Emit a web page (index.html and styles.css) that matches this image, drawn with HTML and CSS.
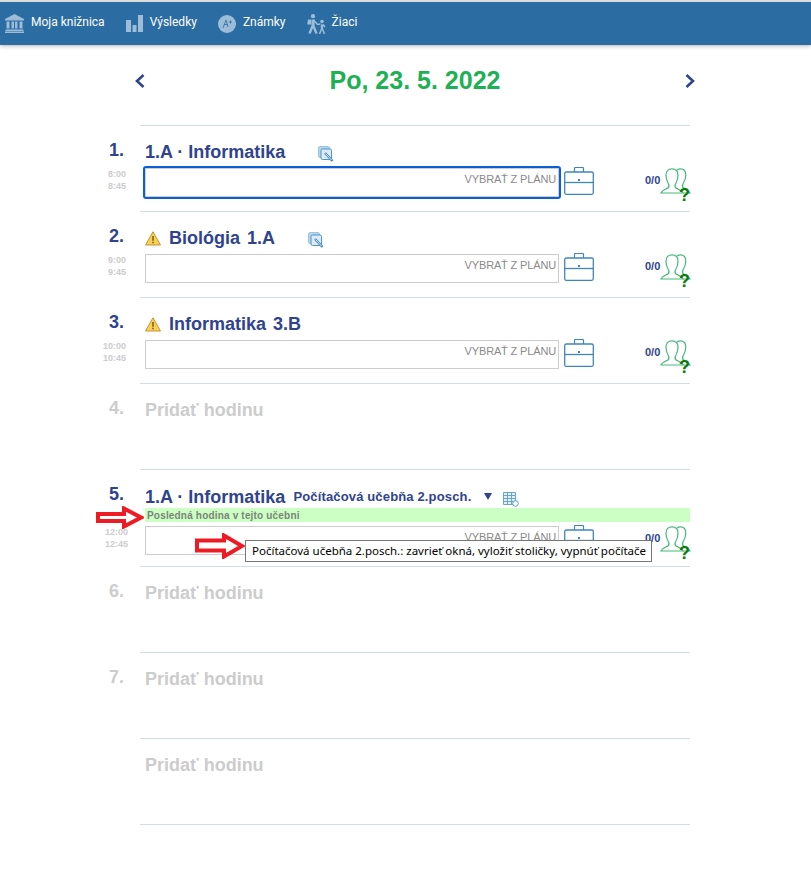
FILE: index.html
```html
<!DOCTYPE html>
<html lang="sk">
<head>
<meta charset="utf-8">
<title>Po, 23. 5. 2022</title>
<link rel="stylesheet" href="styles.css">
</head>
<body>
<svg class="defs" width="0" height="0" aria-hidden="true">
  <symbol id="i-case" viewBox="0 0 30 28">
    <path d="M10.5 5V1.5a1 1 0 0 1 1-1h7a1 1 0 0 1 1 1V5" fill="none" stroke="currentColor" stroke-width="1.2"/>
    <rect x=".7" y="5" width="28.6" height="22.3" rx="1.5" fill="none" stroke="currentColor" stroke-width="1.3"/>
    <path d="M.7 15.5h28.6" stroke="currentColor" stroke-width="1.3"/>
    <rect x="14" y="12" width="2" height="2" fill="currentColor"/>
  </symbol>
  <symbol id="i-people" viewBox="0 0 32 26">
    <path d="M17 2C18.500 1 19.500 .8 20.500 .8C23.500 .8 25.800 3 25.800 7C25.800 10 25 12.500 23.500 15C22.500 16.500 22 18 23 19.500C24.500 21 28 22 30 25L23 25" fill="none" stroke="currentColor" stroke-width="1.200"/>
    <path d="M1 25C2 22 7 21 8.500 19.500C9.500 18 9 16.500 8 15C6.500 12.500 6 10 6 7C6 3 8.500 .8 12 .8C15.500 .8 18 3 18 7C18 10 17.500 12.500 16 15C15 16.500 14.500 18 15.500 19.500C17 21 21.500 22 23 25Z" fill="#fff" stroke="currentColor" stroke-width="1.200"/>
  </symbol>
  <symbol id="i-copy" viewBox="0 0 16 16">
    <rect x=".5" y=".5" width="11" height="11" rx="1.500" fill="#b5d5ea" stroke="#9cc5e0"/>
    <rect x="3" y="3" width="10.500" height="10.500" rx="1.500" fill="#dcebf6" stroke="#4f95c8"/>
    <path d="M7 7l7.500 8" stroke="#3f86bf" stroke-width="2.400"/>
    <path d="M7.500 7.500l6 6.500" stroke="#fff" stroke-width=".8"/>
  </symbol>
  <symbol id="i-warn" viewBox="0 0 16 15">
    <path d="M8 .8L15.500 14H.5z" fill="#f7d154" stroke="#c9923a" stroke-linejoin="round"/>
    <path d="M8 5v4.800" stroke="#7a5a10" stroke-width="1.500"/>
    <path d="M8 10.800v1.500" stroke="#7a5a10" stroke-width="1.500"/>
  </symbol>
</svg>

<header class="topbar">
  <nav class="nav">
    <a class="nav__item">
      <svg class="nav__icon" width="19" height="19" viewBox="0 0 19 19"><path d="M9.500 0L19 5v1.500H0V5z M1.500 7.500h3v7h-3z M6.500 7.500h2.500v7H6.500z M10 7.500h2.500v7H10z M14.500 7.500h3v7h-3z M.5 15.500h18V17H.5z M0 17.500h19V19H0z"/></svg>
      <span>Moja knižnica</span>
    </a>
    <a class="nav__item">
      <svg class="nav__icon" width="17" height="17" viewBox="0 0 17 17"><path d="M0 5h5v12H0z M6.500 10h4v7h-4z M12 0h5v17h-5z"/></svg>
      <span>Výsledky</span>
    </a>
    <a class="nav__item">
      <svg class="nav__icon" width="18" height="18" viewBox="0 0 18 18"><circle cx="9" cy="9" r="9"/><path d="M5 13L8 5l2 7M6.200 9.500h3.300M11 7h3M12.500 5.500v3" fill="none" stroke="#2b6da3" stroke-width=".8"/></svg>
      <span>Známky</span>
    </a>
    <a class="nav__item nav__item--last">
      <svg class="nav__icon nav__icon--walk" width="20" height="20" viewBox="0 0 20 20">
        <circle cx="7" cy="2.200" r="2.100"/>
        <circle cx="16" cy="7.500" r="1.800"/>
        <path class="thick" d="M7 5.500V11"/>
        <path class="mid" d="M7 11L3.500 19.500M7 11l3.500 8.500M16 10.500v3.500"/>
        <path class="thin" d="M7.500 6l4 4.500 3-.5M16 14l-2.500 6M16 14l2.500 6M17 10.500l2 2.500"/>
        <path d="M2 5.500h3v5H1.200z"/>
      </svg>
      <span>Žiaci</span>
    </a>
  </nav>
</header>

<main class="page">
  <div class="datebar">
    <svg class="chev" width="10" height="14" viewBox="0 0 10 14"><path d="M8.500 1L2 7l6.500 6" fill="none" stroke="currentColor" stroke-width="2.600"/></svg>
    <h1 class="date">Po, 23. 5. 2022</h1>
    <svg class="chev" width="10" height="14" viewBox="0 0 10 14"><path d="M1.500 1L8 7l-6.500 6" fill="none" stroke="currentColor" stroke-width="2.600"/></svg>
  </div>

  <div class="lessons">
    <section class="row">
      <div class="gutter"><div class="num">1.</div><div class="times"><div>8:00</div><div>8:45</div></div></div>
      <div class="body">
        <div class="title"><span>1.A · Informatika</span><svg class="copy" width="16" height="16"><use href="#i-copy"/></svg></div>
        <div class="controls">
          <div class="plan is-focused"><span>VYBRAŤ Z PLÁNU</span></div>
          <svg class="case" width="30" height="28"><use href="#i-case"/></svg>
          <span class="count">0/0</span>
          <span class="people"><svg width="32" height="26"><use href="#i-people"/></svg><b class="q">?</b></span>
        </div>
      </div>
    </section>

    <section class="row">
      <div class="gutter"><div class="num">2.</div><div class="times"><div>9:00</div><div>9:45</div></div></div>
      <div class="body">
        <div class="title"><svg class="warn" width="16" height="15"><use href="#i-warn"/></svg><span class="name">Biológia 1.A</span><svg class="copy" width="16" height="16"><use href="#i-copy"/></svg></div>
        <div class="controls">
          <div class="plan"><span>VYBRAŤ Z PLÁNU</span></div>
          <svg class="case" width="30" height="28"><use href="#i-case"/></svg>
          <span class="count">0/0</span>
          <span class="people"><svg width="32" height="26"><use href="#i-people"/></svg><b class="q">?</b></span>
        </div>
      </div>
    </section>

    <section class="row">
      <div class="gutter"><div class="num">3.</div><div class="times"><div>10:00</div><div>10:45</div></div></div>
      <div class="body">
        <div class="title"><svg class="warn" width="16" height="15"><use href="#i-warn"/></svg><span class="name">Informatika 3.B</span></div>
        <div class="controls">
          <div class="plan"><span>VYBRAŤ Z PLÁNU</span></div>
          <svg class="case" width="30" height="28"><use href="#i-case"/></svg>
          <span class="count">0/0</span>
          <span class="people"><svg width="32" height="26"><use href="#i-people"/></svg><b class="q">?</b></span>
        </div>
      </div>
    </section>

    <section class="row row--empty">
      <div class="gutter"><div class="num">4.</div></div>
      <div class="body"><div class="title"><span>Pridať hodinu</span></div></div>
    </section>

    <section class="row row--noted">
      <div class="gutter"><div class="num">5.</div><div class="times"><div>12:00</div><div>12:45</div></div></div>
      <div class="body">
        <div class="title">
          <span>1.A · Informatika</span>
          <span class="room">Počítačová učebňa 2.posch.</span>
          <svg class="tri" width="8" height="7" viewBox="0 0 8 7"><path d="M0 0h8L4 7z" fill="currentColor"/></svg>
          <svg class="gridicon" width="16" height="15" viewBox="0 0 16 15"><path d="M.5.500h12v12H.5zM.5 3.500h12M.5 6.500h12M.5 9.500h12M4.500.500v12M8.500.500v12" fill="#e3f0f9" stroke="#6ba4cf"/><circle cx="12.500" cy="11.500" r="2.800" fill="#fff" stroke="#5a9ccb"/></svg>
        </div>
        <div class="band">Posledná hodina v tejto učebni</div>
        <div class="controls">
          <div class="plan"><span>VYBRAŤ Z PLÁNU</span></div>
          <svg class="case" width="30" height="28"><use href="#i-case"/></svg>
          <span class="count">0/0</span>
          <span class="people"><svg width="32" height="26"><use href="#i-people"/></svg><b class="q">?</b></span>
        </div>
      </div>
      <svg class="arrow arrow--band" width="48" height="23" viewBox="0 0 48 23"><path d="M2 8h26V2.500L45 11.500 28 20.500V15H2z" fill="#fff" stroke="#ed1c24" stroke-width="4"/></svg>
      <svg class="arrow arrow--tip" width="50" height="26" viewBox="0 0 50 26"><path d="M2 7.500h27V2.500L47 13 29 23.500V17.500H2z" fill="#fff" stroke="#ed1c24" stroke-width="4"/></svg>
      <div class="tooltip">Počítačová učebňa 2.posch.: zavrieť okná, vyložiť stoličky, vypnúť počítače</div>
    </section>

    <section class="row row--empty">
      <div class="gutter"><div class="num">6.</div></div>
      <div class="body"><div class="title"><span>Pridať hodinu</span></div></div>
    </section>

    <section class="row row--empty">
      <div class="gutter"><div class="num">7.</div></div>
      <div class="body"><div class="title"><span>Pridať hodinu</span></div></div>
    </section>

    <section class="row row--empty">
      <div class="gutter"></div>
      <div class="body"><div class="title"><span>Pridať hodinu</span></div></div>
    </section>
  </div>
</main>
</body>
</html>
```

FILE: styles.css
```css
* { box-sizing: border-box; }

html, body { margin: 0; padding: 0; background: #fff; }

body {
  font-family: "Liberation Sans", Arial, sans-serif;
  color: #2f4390;
}

.defs { position: absolute; }

.topbar {
  height: 45px;
  background: #2b6da3;
  border-top: 2px solid #dcdcdc;
  box-shadow: 0 1px 4px rgba(0, 0, 0, .3);
}

.nav {
  display: flex;
  height: 100%;
  padding-left: 5px;
  align-items: center;
}

.nav__item {
  display: flex;
  align-items: center;
  gap: 7px;
  margin-right: 21px;
  font: 12px/1 Roboto, sans-serif;
  color: #fff;
}

.nav__item--last { margin-left: -1px; gap: 6px; }

.nav__item span { position: relative; top: -2px; }

.nav__icon { fill: #9dbcd8; flex: none; }

.nav__icon--walk path { stroke: #9dbcd8; fill: none; }
.nav__icon--walk path:last-child { fill: #9dbcd8; stroke: none; }
.nav__icon--walk .thick { stroke-width: 3.200; }
.nav__icon--walk .mid { stroke-width: 2.400; }
.nav__icon--walk .thin { stroke-width: 1.500; }

.page { padding-left: 100px; }

.datebar {
  display: flex;
  align-items: center;
  justify-content: space-between;
  width: 560px;
  height: 80px;
  margin-left: 35px;
  padding-bottom: 9px;
  color: #2f4390;
}

.date {
  margin: 0 0 1px;
  font-size: 25px;
  font-weight: 700;
  line-height: 30px;
  color: #1eb154;
}

.chev { margin-top: 1px; }

.lessons::before {
  content: "";
  display: block;
  width: 550px;
  margin-left: 40px;
  border-top: 1px solid #d3dde6;
}

.row { display: flex; position: relative; }

.gutter { width: 40px; flex: none; padding-top: 12px; }

.num {
  padding-left: 9px;
  font-size: 18px;
  font-weight: 700;
  line-height: 24px;
}

.times {
  margin-top: 6px;
  padding-right: 14px;
  font-size: 9px;
  font-weight: 700;
  line-height: 12px;
  text-align: right;
  color: #ccc;
}

.body {
  width: 550px;
  height: 86px;
  padding-left: 5px;
  border-bottom: 1px solid #d3dde6;
}

.title {
  display: flex;
  align-items: center;
  height: 38px;
  padding-top: 14px;
  font-size: 18px;
  font-weight: 700;
  line-height: 24px;
}

.name { word-spacing: 2px; }

.warn { margin-right: 8px; flex: none; }

.copy { flex: none; margin: 3px 0 0 32.500px; }

.room {
  margin-left: 8px;
  font-size: 13px;
  letter-spacing: .15px;
}

.tri { margin-left: 12.500px; margin-top: -2px; }

.gridicon { margin-left: 11.500px; margin-top: 5px; }

.controls {
  display: flex;
  align-items: flex-start;
  margin-top: 4px;
}

.controls > * { flex: none; }

.plan {
  display: flex;
  justify-content: flex-end;
  width: 414px;
  height: 29px;
  padding: 3px 2px 0 0;
  border: 1px solid #ccc;
  font-size: 11px;
  font-weight: 400;
  line-height: 14px;
  letter-spacing: -.15px;
  color: #8a8a8a;
}

.is-focused {
  outline: 2px solid #0b5fd4;
  border-radius: 1px;
}

.case { margin: -1px 0 0 5px; color: #3f87b9; }

.count {
  width: 15px;
  margin: 6px 0 0 51px;
  font-size: 11px;
  font-weight: 700;
  line-height: 12px;
  white-space: nowrap;
  color: #2f4390;
}

.people {
  position: relative;
  display: block;
  height: 26px;
  color: #45b97c;
}

.q {
  position: absolute;
  left: 19px;
  top: 18px;
  font-size: 18px;
  line-height: 18px;
  color: #0a7a0a;
}

.row--empty .num,
.row--empty .title { color: #ccc; }

.row--noted .times { margin-top: 21px; padding-right: 12px; line-height: 11.500px; }
.row--noted .body { height: 97px; }
.row--noted .title { padding-top: 16px; }

.band {
  height: 14px;
  padding-left: 2px;
  background: #ccffc4;
  font-size: 10px;
  font-weight: 700;
  line-height: 15px;
  letter-spacing: .18px;
  color: #7b8478;
}

.arrow { position: absolute; }
.arrow--band { left: -4px; top: 36px; }
.arrow--tip { left: 95px; top: 63px; }

.tooltip {
  position: absolute;
  left: 145px;
  top: 70px;
  width: 407px;
  height: 22px;
  padding: 0 6px;
  background: #fff;
  border: 1px solid #767676;
  font-family: "Noto Sans", sans-serif;
  font-size: 11.500px;
  line-height: 20px;
  white-space: nowrap;
  color: #000;
}
```
